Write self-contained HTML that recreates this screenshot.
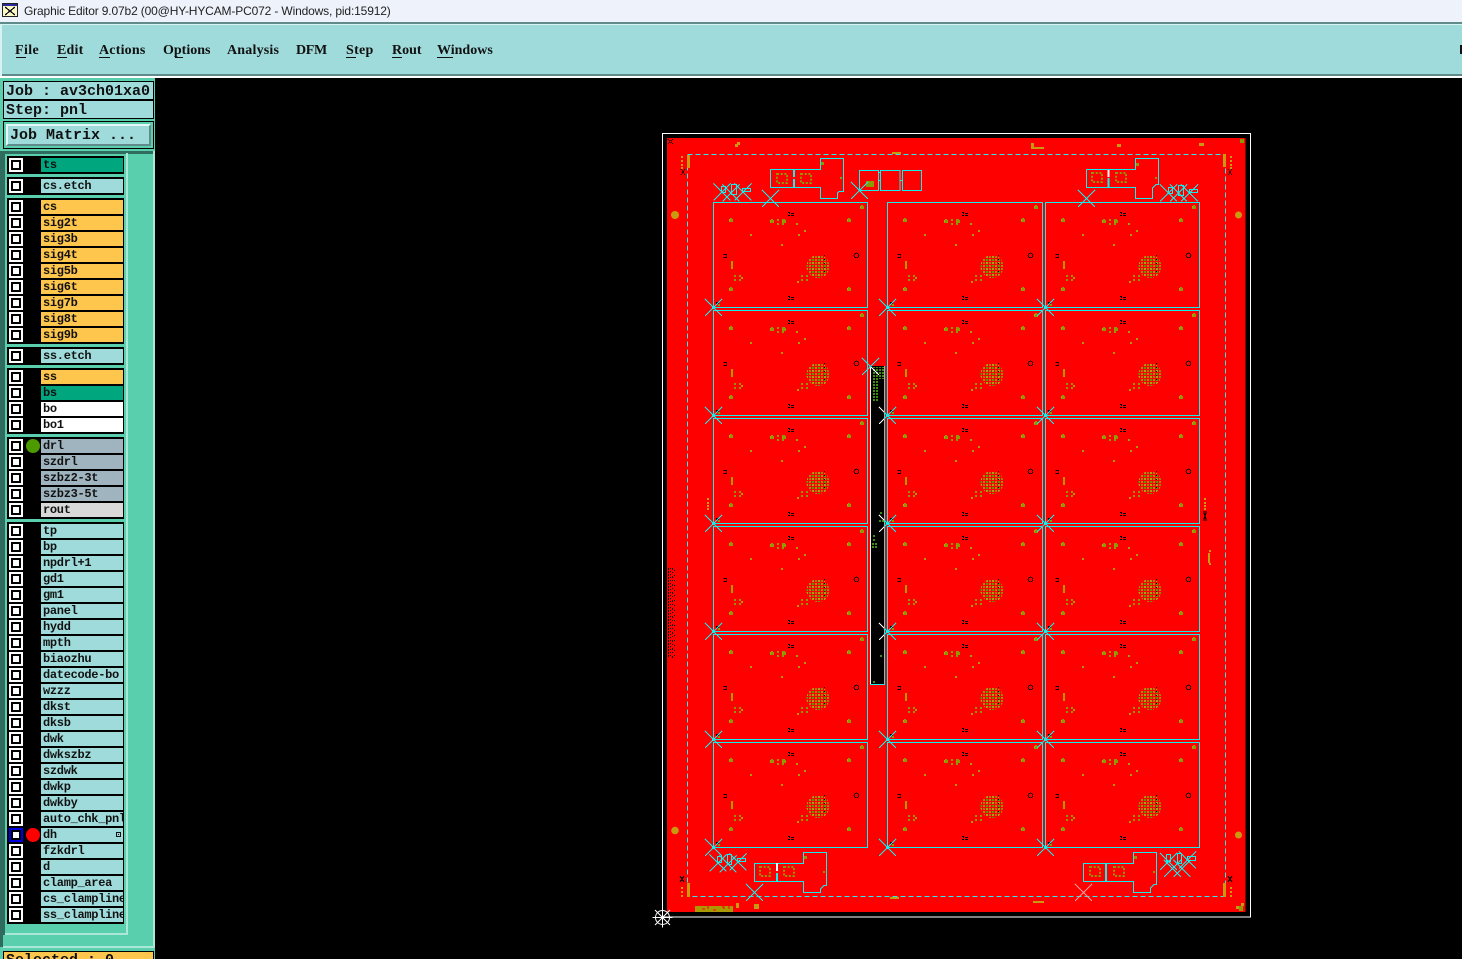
<!DOCTYPE html>
<html><head><meta charset="utf-8"><title>Graphic Editor</title>
<style>
html,body{margin:0;padding:0;width:1462px;height:959px;overflow:hidden;background:#000}
div{box-sizing:border-box}
.a{position:absolute}
#title{left:0;top:0;width:1462px;height:22px;background:#eef2fb;font:12px/22px "Liberation Sans",sans-serif;color:#222;padding-left:24px;letter-spacing:-.15px;white-space:pre}
#menu{left:0;top:22px;width:1462px;height:56px;background:#9fdbdb;border-top:2px solid #5f8b8b;border-bottom:2px solid #fff;box-shadow:inset 2px 1px 0 #d8f2f2,inset 0 -2px 0 #5f8b8b}
.m{position:absolute;top:42px;font:bold 14px/18px "Liberation Serif",serif;color:#111;white-space:pre}
.u{position:absolute;top:57px;height:1px;background:#111}
#panel{left:0;top:78px;width:155px;height:881px;background:#59cfae}
.bx{position:absolute;left:3px;width:151px;height:19px;border:1px solid #000;background:#9fdbdb;font:bold 15px/19px "Liberation Mono",monospace;color:#111;padding-left:2px;white-space:pre}
.g{position:absolute;left:7px;width:117px;background:#000;padding-top:2px}
.r{position:relative;height:14px;margin-bottom:2px}
.c{position:absolute;left:2px;top:0;width:14px;height:14px;background:#fff;border:2px solid #fff}
.c:after{content:"";position:absolute;left:0;top:0;width:10px;height:10px;box-sizing:border-box;border:2px solid #000}
.l{position:absolute;left:34px;top:0;width:82px;height:14px;overflow:hidden;background:#9fdbdb;font:bold 12px/15px "Liberation Mono",monospace;letter-spacing:-.3px;color:#111;padding-left:2px;white-space:pre}
.y{background:#ffc64d}.t{background:#00a67e}.w{background:#fff}.s{background:#9fb4bf}.o{background:#d9d9d9}
.dot{position:absolute;left:19px;top:0;width:14px;height:14px;border-radius:50%}
</style></head><body>
<div class="a" id="title">Graphic Editor 9.07b2 (00@HY-HYCAM-PC072 - Windows, pid:15912)</div>
<svg class="a" style="left:2px;top:3px" width="16" height="14" viewBox="0 0 16 14" shape-rendering="crispEdges"><rect width="16" height="14" fill="#222"/><rect x="1" y="1" width="14" height="2" fill="#2a2a9a"/><rect x="1" y="3" width="14" height="10" fill="#fbf8c8"/><path d="M3 4L13 12M13 4L3 12" stroke="#111" stroke-width="1.2"/></svg>
<div class="a" id="menu"></div>
<span class="m" style="left:15px;letter-spacing:.4px">File</span><span class="m" style="left:57px;letter-spacing:.2px">Edit</span><span class="m" style="left:99px;letter-spacing:.2px">Actions</span><span class="m" style="left:163px">Options</span><span class="m" style="left:227px;letter-spacing:.2px">Analysis</span><span class="m" style="left:296px;letter-spacing:-.3px">DFM</span><span class="m" style="left:346px;letter-spacing:.3px">Step</span><span class="m" style="left:392px">Rout</span><span class="m" style="left:437px">Windows</span>
<div class="u" style="left:16px;width:10px"></div><div class="u" style="left:57px;width:10px"></div><div class="u" style="left:99px;width:11px"></div><div class="u" style="left:175px;width:8px"></div><div class="u" style="left:346px;width:10px"></div><div class="u" style="left:392px;width:10px"></div><div class="u" style="left:437px;width:16px"></div>
<div class="a" style="left:1460px;top:45px;width:2px;height:9px;background:#111"></div>

<div class="a" id="panel"></div>
<div class="bx" style="top:81px">Job : av3ch01xa0</div>
<div class="bx" style="top:100px">Step: pnl</div>
<div class="a" style="left:3px;top:121px;width:151px;height:28px;border:1px solid #000;background:#59cfae"></div>
<div class="a" style="left:6px;top:124px;width:145px;height:22px;background:#9fdbdb;border:2px solid;border-color:#e6f7f7 #5f8b8b #5f8b8b #e6f7f7;font:bold 15px/20px 'Liberation Mono',monospace;color:#111;padding-left:2px;white-space:pre">Job Matrix ...</div>
<div class="a" style="left:0;top:151px;width:5px;height:784px;background:#2f6b5e"></div>
<div class="a" style="left:0;top:935px;width:3px;height:12px;background:#2f6b5e"></div>
<div class="a" style="left:0;top:151px;width:155px;height:3px;background:#2f6b5e"></div>
<div class="a" style="left:126px;top:153px;width:2px;height:782px;background:#a9e8d6"></div>
<div class="a" style="left:5px;top:933px;width:123px;height:2px;background:#a9e8d6"></div>
<div class="a" style="left:153px;top:151px;width:2px;height:797px;background:#a9e8d6"></div>
<div class="a" style="left:3px;top:946px;width:152px;height:2px;background:#a9e8d6"></div>
<div class="a" style="left:3px;top:951px;width:151px;height:8px;border:1px solid #000;border-bottom:0;background:#ffc64d;font:bold 15px/18px 'Liberation Mono',monospace;color:#111;padding-left:2px;white-space:pre;overflow:hidden">Selected : 0</div>

<div class="g" style="top:156px"><div class="r"><div class="c"></div><div class="l t">ts</div></div></div>
<div class="g" style="top:177px"><div class="r"><div class="c"></div><div class="l">cs.etch</div></div></div>
<div class="g" style="top:198px">
<div class="r"><div class="c"></div><div class="l y">cs</div></div>
<div class="r"><div class="c"></div><div class="l y">sig2t</div></div>
<div class="r"><div class="c"></div><div class="l y">sig3b</div></div>
<div class="r"><div class="c"></div><div class="l y">sig4t</div></div>
<div class="r"><div class="c"></div><div class="l y">sig5b</div></div>
<div class="r"><div class="c"></div><div class="l y">sig6t</div></div>
<div class="r"><div class="c"></div><div class="l y">sig7b</div></div>
<div class="r"><div class="c"></div><div class="l y">sig8t</div></div>
<div class="r"><div class="c"></div><div class="l y">sig9b</div></div>
</div>
<div class="g" style="top:347px"><div class="r"><div class="c"></div><div class="l">ss.etch</div></div></div>
<div class="g" style="top:368px">
<div class="r"><div class="c"></div><div class="l y">ss</div></div>
<div class="r"><div class="c"></div><div class="l t">bs</div></div>
<div class="r"><div class="c"></div><div class="l w">bo</div></div>
<div class="r"><div class="c"></div><div class="l w">bo1</div></div>
</div>
<div class="g" style="top:437px">
<div class="r"><div class="c"></div><div class="dot" style="background:#4c9a00"></div><div class="l s">drl</div></div>
<div class="r"><div class="c"></div><div class="l s">szdrl</div></div>
<div class="r"><div class="c"></div><div class="l s">szbz2-3t</div></div>
<div class="r"><div class="c"></div><div class="l s">szbz3-5t</div></div>
<div class="r"><div class="c"></div><div class="l o">rout</div></div>
</div>
<div class="g" style="top:522px">
<div class="r"><div class="c"></div><div class="l">tp</div></div>
<div class="r"><div class="c"></div><div class="l">bp</div></div>
<div class="r"><div class="c"></div><div class="l">npdrl+1</div></div>
<div class="r"><div class="c"></div><div class="l">gd1</div></div>
<div class="r"><div class="c"></div><div class="l">gm1</div></div>
<div class="r"><div class="c"></div><div class="l">panel</div></div>
<div class="r"><div class="c"></div><div class="l">hydd</div></div>
<div class="r"><div class="c"></div><div class="l">mpth</div></div>
<div class="r"><div class="c"></div><div class="l">biaozhu</div></div>
<div class="r"><div class="c"></div><div class="l">datecode-bo</div></div>
<div class="r"><div class="c"></div><div class="l">wzzz</div></div>
<div class="r"><div class="c"></div><div class="l">dkst</div></div>
<div class="r"><div class="c"></div><div class="l">dksb</div></div>
<div class="r"><div class="c"></div><div class="l">dwk</div></div>
<div class="r"><div class="c"></div><div class="l">dwkszbz</div></div>
<div class="r"><div class="c"></div><div class="l">szdwk</div></div>
<div class="r"><div class="c"></div><div class="l">dwkp</div></div>
<div class="r"><div class="c"></div><div class="l">dwkby</div></div>
<div class="r"><div class="c"></div><div class="l">auto_chk_pnl</div></div>
<div class="r"><div class="c" style="border-color:#0000e0;background:#fff"></div><div class="dot" style="background:#f00"></div><div class="l">dh<span style="position:absolute;left:75px;top:4px;width:5px;height:5px;box-sizing:border-box;border:1px solid #111;background:#111;box-shadow:inset 0 0 0 1px #9fdbdb"></span></div></div>
<div class="r"><div class="c"></div><div class="l">fzkdrl</div></div>
<div class="r"><div class="c"></div><div class="l">d</div></div>
<div class="r"><div class="c"></div><div class="l">clamp_area</div></div>
<div class="r"><div class="c"></div><div class="l">cs_clampline</div></div>
<div class="r"><div class="c"></div><div class="l">ss_clampline</div></div>
</div>

<svg class="a" style="left:0;top:0" width="1462" height="959" viewBox="0 0 1462 959">
<defs>
<pattern id="hp" width="6" height="6" patternUnits="userSpaceOnUse"><rect width="2" height="2" fill="#7d9400"/><rect x="3" width="2" height="2" fill="#b89a10"/><rect y="3" width="2" height="2" fill="#8a9a00"/><rect x="3" y="3" width="2" height="2" fill="#6f9000"/></pattern>
<pattern id="gp" width="3" height="3" patternUnits="userSpaceOnUse"><rect width="2" height="2" fill="#3f8f0f"/></pattern>
<clipPath id="sl"><rect x="871" y="367" width="13" height="317"/></clipPath>
<path id="x" d="M-8.5-8.5L8.5 8.5M-8.5 8.5L8.5-8.5" fill="none" stroke-width="1"/>
<g id="xc"><use href="#x" stroke="#1ee"/><rect x="-1.5" y="-1.5" width="3" height="3" fill="#1ee"/></g>
<g id="k"><path d="M-2-1h1v-1h2v1h1v3h-4z" fill="#8a9a00"/><rect x="-2" y="-1" width="1" height="2" fill="#c89a10"/></g>
<g id="d4" fill="#8a9a00"><rect width="2" height="2"/><rect x="5" width="2" height="2"/><rect y="4" width="2" height="2"/><rect x="5" y="4" width="2" height="2"/></g>
<g id="bm" fill="#000"><rect x="0" width="2" height="1"/><rect x="3" y="1" width="3" height="1"/><rect x="1" y="1" width="1" height="1"/><rect x="0" y="3" width="2" height="1"/><rect x="3" y="3" width="3" height="1"/></g>
<g id="b" shape-rendering="crispEdges">
<use href="#k" x="18" y="18"/><use href="#k" x="59" y="19"/><use href="#k" x="71" y="19"/><use href="#k" x="136" y="18"/><use href="#k" x="149" y="5"/><use href="#k" x="18" y="87"/><use href="#k" x="136" y="87"/>
<use href="#d4" x="64" y="17"/><use href="#d4" x="21" y="73"/><use href="#d4" x="88" y="73"/>
<g fill="#a89a00"><rect x="83" y="21" width="2" height="2"/><rect x="91" y="28" width="2" height="2"/><rect x="85" y="32" width="2" height="2"/><rect x="37" y="32" width="2" height="2"/><rect x="68" y="42" width="2" height="2"/><rect x="28" y="75" width="2" height="2"/><rect x="84" y="79" width="2" height="2"/><rect x="18" y="59" width="2" height="8"/></g>
<circle cx="105" cy="64.5" r="11.5" fill="url(#hp)"/>
<path d="M111.5 53v20" stroke="#000" stroke-dasharray="1 3"/>
<use href="#bm" x="75" y="10"/><use href="#bm" x="75" y="94"/>
<path d="M10.5 52.5h3v1M13.5 54.5v1h-3" stroke="#000" fill="none"/>
<circle cx="143.500" cy="53.500" r="2.300" fill="none" stroke="#000"/>
<rect x="3" y="100" width="3" height="2" fill="#000"/><rect x="5" y="102" width="2" height="2" fill="#8a9a00"/>
</g>
<g id="q"><rect x="1" y="1" width="10" height="9" fill="none" stroke="#8a9a00" stroke-width="2" stroke-dasharray="2 1.7"/></g>
</defs>

<rect x="662.500" y="133.500" width="588" height="783.500" fill="none" stroke="#fff"/>
<rect x="667" y="138" width="578.500" height="774" fill="#f00" shape-rendering="crispEdges"/>

<!-- boards details -->
<use href="#b" x="713" y="202"/><use href="#b" x="887" y="202"/><use href="#b" x="1045" y="202"/>
<use href="#b" x="713" y="310"/><use href="#b" x="887" y="310"/><use href="#b" x="1045" y="310"/>
<use href="#b" x="713" y="418"/><use href="#b" x="887" y="418"/><use href="#b" x="1045" y="418"/>
<use href="#b" x="713" y="526"/><use href="#b" x="887" y="526"/><use href="#b" x="1045" y="526"/>
<use href="#b" x="713" y="634"/><use href="#b" x="887" y="634"/><use href="#b" x="1045" y="634"/>
<use href="#b" x="713" y="742"/><use href="#b" x="887" y="742"/><use href="#b" x="1045" y="742"/>

<!-- dashed rout -->
<rect x="687.500" y="154.500" width="538" height="742" fill="none" stroke="#2ee" stroke-dasharray="5 3" shape-rendering="crispEdges"/>

<!-- edge features -->
<g fill="#c89a10" shape-rendering="crispEdges">
<rect x="687" y="155" width="3" height="13"/><rect x="1223" y="154" width="3" height="13"/><rect x="687" y="883" width="3" height="14"/><rect x="1223" y="883" width="3" height="14"/>
<rect x="681" y="156" width="2" height="2"/><rect x="681" y="160" width="2" height="2"/><rect x="681" y="164" width="2" height="2"/><rect x="681" y="167" width="2" height="2"/>
<rect x="1230" y="156" width="2" height="2"/><rect x="1230" y="160" width="2" height="2"/><rect x="1230" y="164" width="2" height="2"/><rect x="1230" y="167" width="2" height="2"/>
<rect x="681" y="887" width="2" height="2"/><rect x="681" y="891" width="2" height="2"/><rect x="681" y="895" width="2" height="2"/>
<rect x="1230" y="887" width="2" height="2"/><rect x="1230" y="891" width="2" height="2"/><rect x="1230" y="895" width="2" height="2"/>
<rect x="737" y="142" width="3" height="3"/><rect x="735" y="144" width="3" height="3"/>
<rect x="892" y="152" width="9" height="2"/>
<rect x="1031" y="143" width="3" height="6"/><rect x="1031" y="147" width="13" height="2"/>
<rect x="1117" y="144" width="4" height="3"/><rect x="1199" y="143" width="5" height="3"/>
<rect x="1033" y="901" width="11" height="2"/>
<rect x="1204" y="498" width="2" height="2"/><rect x="1204" y="502" width="2" height="2"/><rect x="1204" y="505" width="2" height="2"/><rect x="1204" y="508" width="2" height="2"/>
<rect x="707" y="498" width="2" height="2"/><rect x="707" y="502" width="2" height="2"/><rect x="707" y="505" width="2" height="2"/><rect x="707" y="508" width="2" height="2"/>
<rect x="1208" y="553" width="2" height="10"/><rect x="1209" y="550" width="2" height="2"/><rect x="1209" y="563" width="2" height="2"/>
<rect x="695" y="906" width="38" height="6" fill="#a89a00"/><rect x="736" y="903" width="3" height="5"/>
<rect x="754" y="904" width="5" height="5"/><rect x="1236" y="906" width="6" height="3"/><rect x="1241" y="903" width="3" height="3"/>
<rect x="890" y="897" width="9" height="2"/>
</g>
<path d="M702 909h3M708 906v3M713 910h3M722 907h2v2M729 906v3" stroke="#f00" fill="none" shape-rendering="crispEdges"/>
<g fill="#c89a10"><circle cx="675" cy="215" r="4"/><circle cx="1238.500" cy="215" r="3.500"/><circle cx="675" cy="830.500" r="3.800"/><circle cx="1238.500" cy="835" r="3.500"/></g>
<g fill="none" stroke="#000" shape-rendering="crispEdges">
<path d="M668 139l5 5M668 144l5-5" stroke-dasharray="1 1"/>
<path d="M681 169l4 6M681 175l4-6" stroke-dasharray="1 1"/>
<path d="M1228 169l4 6M1228 175l4-6" stroke-dasharray="1 1"/>
<path d="M680 876l4 6M680 882l4-6"/>
<path d="M1228 876l4 6M1228 882l4-6"/>
<path d="M668.500 568v90" stroke-dasharray="2 1"/>
<path d="M670.500 568v90" stroke-dasharray="1 2"/>
<path d="M672.500 568v90" stroke-dasharray="2 2 1 3"/>
<path d="M674.500 570v86" stroke-dasharray="1 4"/>
<path d="M1203 512h4M1203 520h4M1204 513l2 6M1206 513l-2 6"/>
</g>
<rect x="1240" y="139" width="4" height="4" fill="#8a9a00"/><rect x="1239" y="906" width="4" height="5" fill="#8a9a00"/>

<!-- board frames -->
<g fill="none" stroke="#1ee" stroke-width="1" shape-rendering="crispEdges">
<rect x="713.500" y="202.500" width="154" height="105"/><rect x="887.500" y="202.500" width="155" height="105"/><rect x="1045.500" y="202.500" width="154" height="105"/>
<rect x="713.500" y="310.500" width="154" height="105"/><rect x="887.500" y="310.500" width="155" height="105"/><rect x="1045.500" y="310.500" width="154" height="105"/>
<rect x="713.500" y="418.500" width="154" height="105"/><rect x="887.500" y="418.500" width="155" height="105"/><rect x="1045.500" y="418.500" width="154" height="105"/>
<rect x="713.500" y="526.500" width="154" height="105"/><rect x="887.500" y="526.500" width="155" height="105"/><rect x="1045.500" y="526.500" width="154" height="105"/>
<rect x="713.500" y="634.500" width="154" height="105"/><rect x="887.500" y="634.500" width="155" height="105"/><rect x="1045.500" y="634.500" width="154" height="105"/>
<rect x="713.500" y="742.500" width="154" height="105"/><rect x="887.500" y="742.500" width="155" height="105"/><rect x="1045.500" y="742.500" width="154" height="105"/>
</g>

<!-- slot -->
<rect x="870" y="366" width="15" height="319" fill="#000" shape-rendering="crispEdges"/>
<rect x="870" y="366" width="1" height="319" fill="#fff" shape-rendering="crispEdges"/>
<path d="M870 684.500h15M884.500 366v319" stroke="#1ee" fill="none" shape-rendering="crispEdges"/>
<rect x="872" y="367" width="6" height="35" fill="url(#gp)" shape-rendering="crispEdges"/>
<rect x="879" y="367" width="6" height="12" fill="url(#gp)" shape-rendering="crispEdges"/>
<g fill="#3f8f0f" shape-rendering="crispEdges"><rect x="880" y="512" width="2" height="2"/><rect x="879" y="520" width="2" height="2"/><rect x="882" y="520" width="2" height="2"/><rect x="873" y="535" width="2" height="2"/><rect x="873" y="539" width="2" height="2"/><rect x="872" y="543" width="2" height="2"/><rect x="875" y="543" width="2" height="2"/><rect x="872" y="546" width="2" height="2"/><rect x="875" y="546" width="2" height="2"/><rect x="880" y="655" width="2" height="2"/><rect x="873" y="681" width="2" height="2"/></g>

<!-- coupons -->
<g fill="none" stroke="#1ee" stroke-width="1.300" shape-rendering="crispEdges">
<path d="M770.500 169.500H820.500V158.500H843.500V191.500H839L837.500 193V198.500H820.500V187.500H770.500Z"/>
<path d="M1086.500 169.500H1135.500V158.500H1158.500V184.500H1156L1152.500 188V198.500H1135.500V187.500H1086.500Z"/>
<path d="M754.500 863.500H803.500V852.500H826.500V885.500H824L820.500 889V892.500H803.500V881.500H754.500Z"/>
<path d="M1083.500 863.500H1133.500V852.500H1156.500V884.500H1154L1150.500 888V892.500H1133.500V881.500H1083.500Z"/>
<rect x="859.500" y="170.500" width="19" height="20"/><rect x="880.500" y="170.500" width="19.500" height="20"/><rect x="902.500" y="170.500" width="19" height="20"/>
<rect x="721.500" y="186.500" width="4" height="6"/><rect x="731.500" y="184.500" width="5" height="10"/><rect x="742.500" y="188.500" width="8" height="3"/>
<rect x="1168.500" y="187.500" width="4" height="6"/><rect x="1178.500" y="185.500" width="5" height="10"/><rect x="1189.500" y="189.500" width="8" height="3"/>
<rect x="717.500" y="856.500" width="4" height="6"/><rect x="727.500" y="854.500" width="4" height="10"/><rect x="737.500" y="858.500" width="8" height="3"/>
<rect x="1166.500" y="854.500" width="4" height="7"/><rect x="1177.500" y="853.500" width="4" height="10"/><rect x="1187.500" y="856.500" width="8" height="4"/>
</g>
<g fill="#1ee" shape-rendering="crispEdges">
<rect x="793" y="169" width="2" height="8"/><rect x="793" y="179" width="2" height="8"/>
<rect x="878" y="172" width="3" height="1"/><rect x="878" y="180" width="3" height="1"/><rect x="900" y="180" width="3" height="1"/>
<rect x="776" y="873" width="2" height="8"/><rect x="1105" y="863" width="2" height="18"/><rect x="1107.500" y="178" width="2" height="9"/>
</g>
<rect x="776" y="863" width="2" height="8" fill="#fff" shape-rendering="crispEdges"/>
<rect x="1107.500" y="170" width="2" height="7" fill="#fff" shape-rendering="crispEdges"/>
<use href="#q" x="776" y="173"/><use href="#q" x="800" y="173"/>
<use href="#q" x="1091" y="172"/><use href="#q" x="1115" y="172"/>
<use href="#q" x="759" y="866"/><use href="#q" x="783" y="866"/>
<use href="#q" x="1089" y="866"/><use href="#q" x="1113" y="866"/>
<rect x="866" y="181" width="8" height="6" fill="#8a9a00" shape-rendering="crispEdges"/>
<g fill="#8a9a00"><rect x="821" y="162" width="3" height="3"/><rect x="840" y="177" width="2" height="2"/><rect x="1136" y="163" width="3" height="3"/><rect x="1155" y="177" width="2" height="2"/><rect x="804" y="856" width="3" height="3"/><rect x="823" y="871" width="2" height="2"/><rect x="1134" y="856" width="3" height="3"/><rect x="1153" y="871" width="2" height="2"/></g>

<!-- crosses -->
<g stroke="#1ee" shape-rendering="crispEdges">
<use href="#x" x="722" y="192"/><use href="#x" x="731" y="193"/><use href="#x" x="743" y="192"/>
<use href="#x" x="770.500" y="198.500"/><use href="#x" x="859.500" y="190.500"/><use href="#x" x="1086.500" y="198.500"/>
<use href="#x" x="1168.500" y="193"/><use href="#x" x="1178.500" y="193"/><use href="#x" x="1189.500" y="193"/>
<use href="#x" x="718" y="863"/><use href="#x" x="728" y="864"/><use href="#x" x="738" y="862"/>
<use href="#x" x="754.500" y="892.500"/>
<use href="#x" x="1168.500" y="861.500"/><use href="#x" x="1172.500" y="868.500"/><use href="#x" x="1182" y="868.500"/><use href="#x" x="1187.500" y="860"/>
<use href="#x" x="870.500" y="366.500"/>
</g>
<use href="#x" x="1083.500" y="892.500" stroke="#ff9a9a" shape-rendering="crispEdges"/>
<g shape-rendering="crispEdges">
<use href="#xc" x="713.500" y="307.500"/><use href="#xc" x="713.500" y="415.500"/><use href="#xc" x="713.500" y="523.500"/><use href="#xc" x="713.500" y="631.500"/><use href="#xc" x="713.500" y="739.500"/><use href="#xc" x="713.500" y="847.500"/>
<use href="#xc" x="887.500" y="307.500"/><use href="#xc" x="887.500" y="415.500"/><use href="#xc" x="887.500" y="523.500"/><use href="#xc" x="887.500" y="631.500"/><use href="#xc" x="887.500" y="739.500"/><use href="#xc" x="887.500" y="847.500"/>
<use href="#xc" x="1045.500" y="307.500"/><use href="#xc" x="1045.500" y="415.500"/><use href="#xc" x="1045.500" y="523.500"/><use href="#xc" x="1045.500" y="631.500"/><use href="#xc" x="1045.500" y="739.500"/><use href="#xc" x="1045.500" y="847.500"/>
</g>
<g clip-path="url(#sl)" stroke="#fff" shape-rendering="crispEdges">
<use href="#x" x="870.500" y="366.500"/><use href="#x" x="887.500" y="415.500"/><use href="#x" x="887.500" y="523.500"/><use href="#x" x="887.500" y="631.500"/>
</g>

<!-- origin -->
<g fill="none" stroke="#fff" stroke-width="1" transform="translate(662.500 917.500)">
<circle r="7"/><path d="M-10 0H10M0-10V10M-7.500-7.500L7.500 7.500M-7.500 7.500L7.500-7.500"/>
</g>
</svg>
</body></html>
